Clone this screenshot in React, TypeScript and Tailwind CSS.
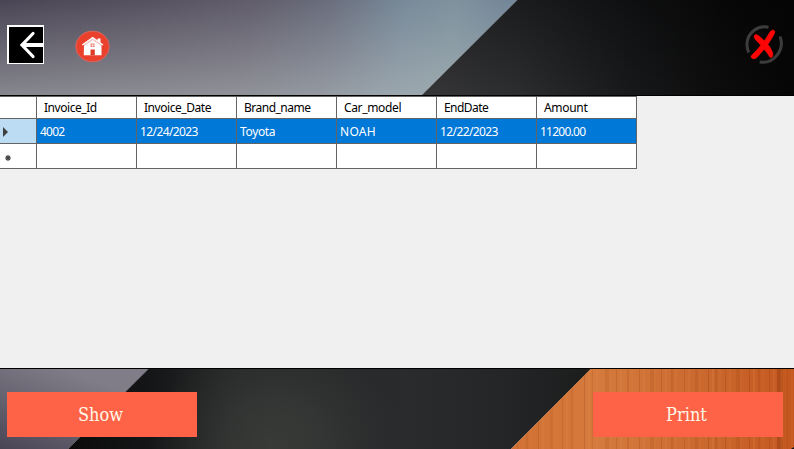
const columns = [
  { name: 'Invoice_Id', value: '4002', nameTracking: 'tracking-[-0.45px]', valueTracking: 'tracking-[-0.75px]' },
  { name: 'Invoice_Date', value: '12/24/2023', nameTracking: 'tracking-[-0.45px]', valueTracking: 'tracking-[-0.6px]' },
  { name: 'Brand_name', value: 'Toyota', nameTracking: 'tracking-[-0.5px]', valueTracking: 'tracking-[-0.35px]' },
  { name: 'Car_model', value: 'NOAH', nameTracking: 'tracking-[-0.35px]', valueTracking: 'tracking-[0.3px]' },
  { name: 'EndDate', value: '12/22/2023', nameTracking: 'tracking-[-0.55px]', valueTracking: 'tracking-[-0.6px]' },
  { name: 'Amount', value: '11200.00', nameTracking: 'tracking-[-0.3px]', valueTracking: 'tracking-[-0.75px]' },
];

function HeaderBackdrop() {
  return (
    <svg className="absolute inset-0" width="794" height="95" viewBox="0 0 794 95" aria-hidden="true">
      <defs>
        <linearGradient id="slate" x1="0" y1="0" x2="500" y2="60" gradientUnits="userSpaceOnUse">
          <stop offset="0" stopColor="#4a4554" />
          <stop offset="0.3" stopColor="#575260" />
          <stop offset="0.5" stopColor="#615d6b" />
          <stop offset="0.65" stopColor="#6a6e7d" />
          <stop offset="0.8" stopColor="#788a99" />
          <stop offset="0.9" stopColor="#7e929d" />
          <stop offset="1" stopColor="#748798" />
        </linearGradient>
        <linearGradient id="slateLight" x1="0" y1="0" x2="0" y2="1">
          <stop offset="0" stopColor="#b6bbc0" stopOpacity="0" />
          <stop offset="1" stopColor="#b8bebf" stopOpacity="0.54" />
        </linearGradient>
        <linearGradient id="coal" x1="0" y1="0" x2="1" y2="0">
          <stop offset="0" stopColor="#363638" />
          <stop offset="0.25" stopColor="#2c2d2f" />
          <stop offset="0.55" stopColor="#18191b" />
          <stop offset="0.8" stopColor="#0c0c0c" />
          <stop offset="1" stopColor="#060606" />
        </linearGradient>
        <linearGradient id="coalShade" x1="0" y1="0" x2="0" y2="1">
          <stop offset="0" stopColor="#000" stopOpacity="0.38" />
          <stop offset="1" stopColor="#000" stopOpacity="0" />
        </linearGradient>
      </defs>
      <path d="M0 0H518L422 95H0Z" fill="url(#slate)" />
      <path d="M0 0H518L422 95H0Z" fill="url(#slateLight)" />
      <path d="M517.500 0H794V95H422Z" fill="url(#coal)" />
      <path d="M517.500 0H794V95H422Z" fill="url(#coalShade)" />
    </svg>
  );
}

const grain = [
  [6, 1, 0.12], [15, 2, 0.1], [27, 1, 0.18], [39, 3, 0.08], [51, 1, 0.15], [60, 2, 0.1], [73, 1, 0.2], [81, 1, 0.12],
  [94, 4, 0.1], [105, 1, 0.18], [116, 2, 0.12], [128, 1, 0.2], [139, 4, 0.1], [150, 1, 0.2], [160, 2, 0.14],
  [173, 1, 0.18], [184, 3, 0.1], [197, 1, 0.24], [204, 2, 0.14], [214, 1, 0.2], [225, 4, 0.1], [238, 1, 0.24],
  [247, 2, 0.14], [258, 1, 0.2], [266, 3, 0.16], [276, 1, 0.16],
];

function FooterBackdrop() {
  return (
    <svg className="absolute inset-0" width="794" height="80" viewBox="0 0 794 80" aria-hidden="true">
      <defs>
        <linearGradient id="ash" x1="10" y1="84" x2="45" y2="-8" gradientUnits="userSpaceOnUse">
          <stop offset="0" stopColor="#4a4555" />
          <stop offset="0.5" stopColor="#67626f" />
          <stop offset="1" stopColor="#807c88" />
        </linearGradient>
        <linearGradient id="night" x1="68" y1="0" x2="590" y2="0" gradientUnits="userSpaceOnUse">
          <stop offset="0" stopColor="#0b0b0b" />
          <stop offset="0.16" stopColor="#151617" />
          <stop offset="0.3" stopColor="#242526" />
          <stop offset="0.65" stopColor="#2a2b2d" />
          <stop offset="0.85" stopColor="#242526" />
          <stop offset="1" stopColor="#1b1c1c" />
        </linearGradient>
        <radialGradient id="glow" cx="275" cy="76" r="125" gradientUnits="userSpaceOnUse">
          <stop offset="0" stopColor="#3e403d" stopOpacity="0.8" />
          <stop offset="0.4" stopColor="#3b3d3a" stopOpacity="0.6" />
          <stop offset="1" stopColor="#343632" stopOpacity="0" />
        </radialGradient>
        <linearGradient id="wood" x1="0" y1="0" x2="1" y2="0">
          <stop offset="0" stopColor="#d17032" />
          <stop offset="0.3" stopColor="#d47b3d" />
          <stop offset="0.65" stopColor="#cb6a30" />
          <stop offset="1" stopColor="#c4581f" />
        </linearGradient>
        <clipPath id="woodEdge">
          <path d="M590.500 0H794V80H511Z" />
        </clipPath>
      </defs>
      <path d="M0 0H149L68 80H0Z" fill="url(#ash)" />
      <path d="M148.500 0H591L511 80H68Z" fill="url(#night)" />
      <path d="M148.500 0H591L511 80H68Z" fill="url(#glow)" />
      <g clipPath="url(#woodEdge)">
        <rect x="511" width="283" height="80" fill="url(#wood)" />
        {grain.map(([x, w, o]) => (
          <rect key={x} x={511 + x} width={w} height="80" fill="#82300c" opacity={o} />
        ))}
        {grain.map(([x, , o]) => (
          <rect key={x} x={515 + x} width="2" height="80" fill="#f0a060" opacity={o * 0.6} />
        ))}
        <rect x="777" width="6" height="80" fill="#82300c" opacity="0.22" />
      </g>
      <path d="M791 80L794 78V80Z" fill="#111" />
    </svg>
  );
}

function BackIcon() {
  return (
    <svg width="37" height="39" viewBox="0 0 37 39" className="block">
      <rect width="37" height="39" fill="#fff" />
      <rect x="2" y="2" width="34" height="36" fill="#000" />
      <path d="M36 20H16" stroke="#fff" strokeWidth="4" />
      <path d="M26 8.500L15 20L26 31.500" fill="none" stroke="#fff" strokeWidth="3.200" strokeLinecap="round" />
    </svg>
  );
}

function HomeIcon() {
  return (
    <svg width="36" height="33" viewBox="0 0 36 33" className="block">
      <ellipse cx="17.500" cy="16.500" rx="16.700" ry="15.300" fill="#ea402c" stroke="#dc6660" strokeWidth="1" />
      <path d="M9 14.500L17.700 8.500L26.500 14.500V25.300H8.800Z" fill="#fff" />
      <path d="M7.300 15L17.700 7.600L28 15" fill="none" stroke="#fff" strokeWidth="1.500" />
      <path d="M8.500 15.800L17.700 9.600L27 15.800" fill="none" stroke="#ee8175" strokeWidth="0.600" />
      <path d="M22.500 8.500H25.500V13L22.500 10.500Z" fill="#fff" />
      <path d="M15.500 13.500H19.500V17H15.500Z" fill="#ef7768" />
      <path d="M17.500 13.500V17M15.500 15.200H19.500" stroke="#fff" strokeWidth="0.600" />
      <path d="M15.500 19.500H19.800V25.300H15.500Z" fill="#dc3b2a" />
    </svg>
  );
}

function CloseIcon() {
  return (
    <svg width="38" height="40" viewBox="0 0 38 40" className="block">
      <g fill="none" stroke="#3c3c3c" strokeWidth="3">
        <path d="M23.500 2.200C13 0 2 7.500 2 19.500C2 22.500 2.500 25 3.700 27.500" />
        <path d="M35 11.500C40 24 29.500 39.500 14.700 37" />
      </g>
      <path
        d="M9.300 11C9.800 9 12.500 9.700 14.500 11.500L19.500 16L25.200 6.800C26.300 4.700 29.800 4.400 29.700 7C29.500 9 26.500 13.800 22.800 19.500C25.500 22.500 27.500 26.500 27.800 29.500C28 32 25.800 33.500 24.400 31.500C23.300 29 21 26.300 19 24.300L12.500 31.800C10.500 34.500 5.500 34.200 6.200 31C8.500 28.700 13 24 15.800 20.300C13.500 16.800 8.500 14 9.300 11Z"
        fill="#fe0505"
        stroke="#fe0505"
        strokeWidth="0.800"
        strokeLinejoin="round"
      />
    </svg>
  );
}

const cell = 'flex items-center border-r border-b border-[#646464]';
const actionButton =
  "flex h-[45px] w-[190px] items-center justify-center bg-[#ff6347] pr-[3px] font-['DejaVu_Serif_Condensed','DejaVu_Serif',serif] text-[18px] [font-stretch:condensed] text-[#fff8e8]";

export default function App() {
  return (
    <main className="flex h-[449px] w-[794px] flex-col overflow-hidden bg-[#f0f0f0] font-['Noto_Sans','Open_Sans',sans-serif]">
      <header className="relative h-24 shrink-0 border-b border-black">
        <HeaderBackdrop />
        <div className="relative flex items-start pt-[25px] pl-[7px]">
          <button aria-label="Back"><BackIcon /></button>
          <button aria-label="Home" className="mt-[5px] ml-[31px]"><HomeIcon /></button>
          <button aria-label="Close" className="mr-[11px] ml-auto"><CloseIcon /></button>
        </div>
      </header>

      <section className="flex-1">
        <div className="grid w-[637px] grid-cols-[37px_repeat(6,100px)] grid-rows-[22px_25px_25px] border-t border-[#646464] bg-white text-[12px] leading-none text-black">
          <div className={cell} />
          {columns.map((column) => (
            <div key={column.name} className={`${cell} ${column.nameTracking} pl-[7px]`}>{column.name}</div>
          ))}
          <div className={`${cell} bg-[#bcdcf4] pt-px pl-[3px]`}>
            <svg width="5" height="10" viewBox="0 0 5 10"><path d="M0 0L5 5L0 10Z" fill="#404040" /></svg>
          </div>
          {columns.map((column) => (
            <div key={column.name} className={`${cell} ${column.valueTracking} bg-[#0078d7] pt-[2px] pl-[3px] text-white`}>
              {column.value}
            </div>
          ))}
          <div className={`${cell} pl-[5px]`}>
            <svg width="6" height="6" viewBox="0 0 6 6" className="mt-[3px]">
              <path d="M3 0V6M0 3H6M1 1L5 5M5 1L1 5" stroke="#404040" strokeWidth="1.100" />
            </svg>
          </div>
          {columns.map((column) => <div key={column.name} className={cell} />)}
        </div>
      </section>

      <footer className="relative h-[81px] shrink-0 border-t border-black">
        <FooterBackdrop />
        <div className="relative flex justify-between pt-[23px] pr-[11px] pl-[7px]">
          <button className={actionButton}>Show</button>
          <button className={actionButton}>Print</button>
        </div>
      </footer>
    </main>
  );
}
